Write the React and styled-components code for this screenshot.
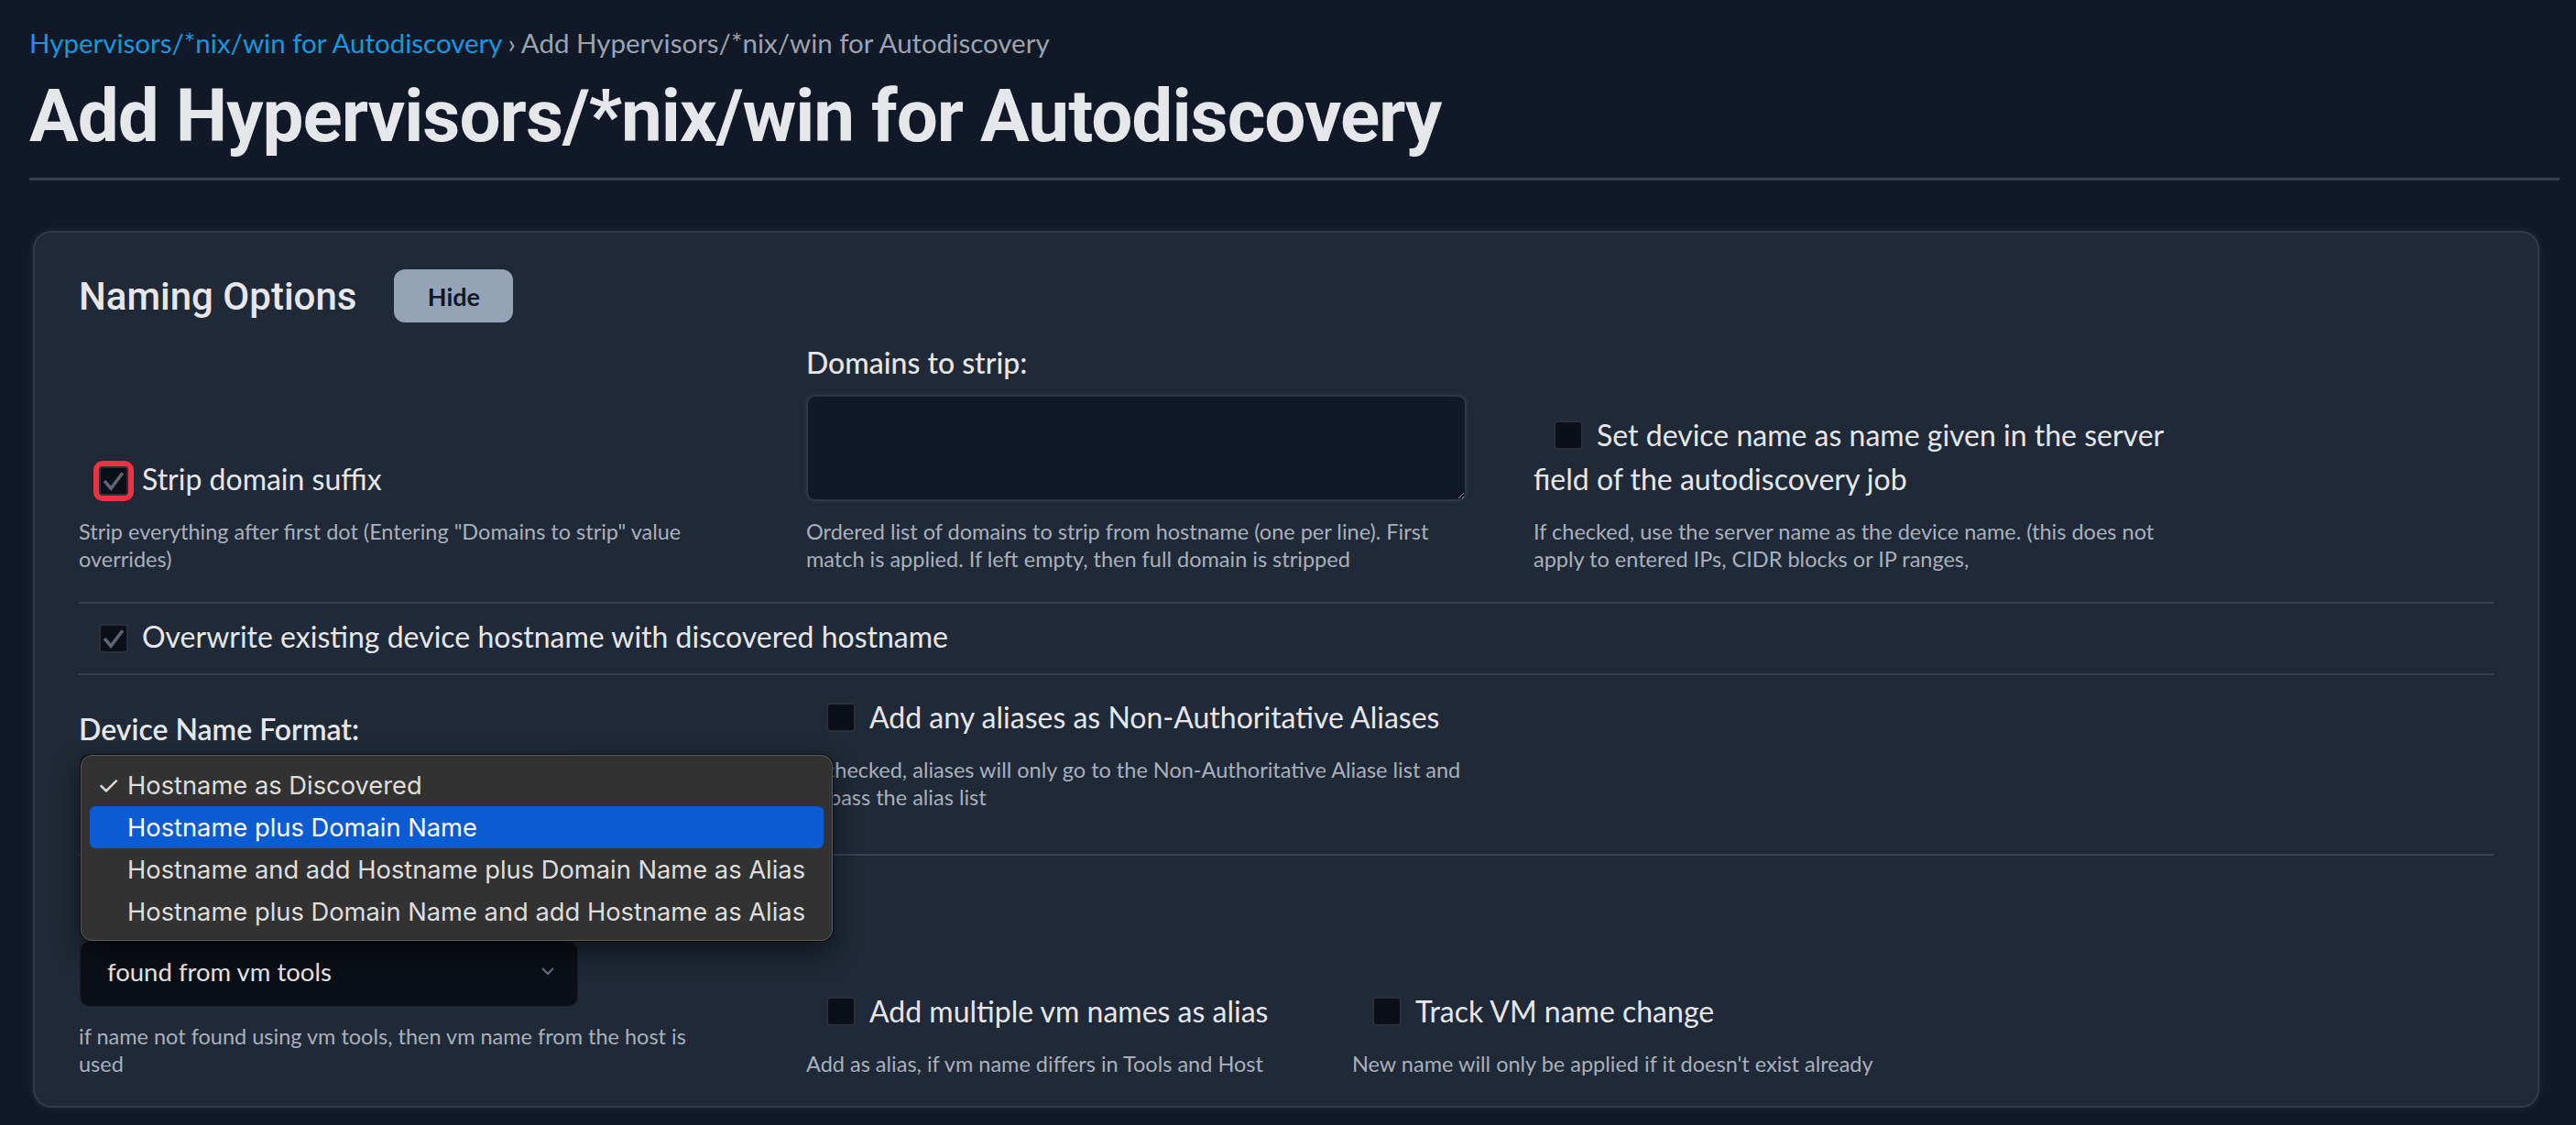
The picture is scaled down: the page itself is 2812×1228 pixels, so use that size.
import React from "react";
import styled, { createGlobalStyle } from "styled-components";

const GlobalStyle = createGlobalStyle`
  * { box-sizing: border-box; }
  html, body { margin: 0; background: #111827; }
  body { font-family: Lato, "Open Sans", sans-serif; color: #e5e7eb; }
`;

const Page = styled.div`
  min-height: 1228px;
  padding: 27px 18px 0 32px;
`;

const Breadcrumb = styled.nav`
  font-size: 29.5px;
  line-height: 40px;
  color: #9ca3af;
`;

const Crumb = styled.a`
  color: #1897de;
  text-decoration: none;
`;

const Sep = styled.span`
  margin: 0 6px;
`;

const Title = styled.h1`
  margin: 12px 0 0;
  font-family: Roboto, sans-serif;
  font-weight: 700;
  font-size: 80px;
  line-height: 96px;
  letter-spacing: -1px;
  color: #e5e7eb;
`;

const Rule = styled.hr`
  margin: 19px 0 0;
  border: 0;
  height: 3px;
  background: #374151;
`;

const Card = styled.section`
  margin: 55px 22px 0 4px;
  padding: 40px 48px 31px;
  background: #1f2937;
  border: 2px solid #323b4a;
  border-radius: 20px;
  box-shadow: 0 0 8px rgba(148, 163, 184, 0.14);
`;

const CardHeader = styled.div`
  display: flex;
  align-items: center;
  gap: 41px;
`;

const SectionTitle = styled.h2`
  margin: 0;
  font-family: Roboto, sans-serif;
  font-weight: 500;
  font-size: 42px;
  color: #e5e7eb;
`;

const HideButton = styled.button`
  width: 130px;
  height: 58px;
  border: 0;
  border-radius: 12px;
  background: #94a3b8;
  color: #111827;
  font-family: Lato, sans-serif;
  font-weight: 700;
  font-size: 27px;
`;

const Grid = styled.div`
  display: grid;
  grid-template-columns: repeat(3, 721px);
  column-gap: 73px;
  align-items: end;
  padding: ${(p) => p.$pt}px 0 ${(p) => p.$pb}px;
  border-top: ${(p) => (p.$divided ? "2px solid #374151" : "0")};
`;

const Row = styled.div`
  padding: 12px 0 16px;
  border-top: 2px solid #374151;
`;

const Field = styled.div`
  padding-bottom: ${(p) => p.$pb || 0}px;
`;

const Pair = styled.div`
  grid-column: span 2;
  display: grid;
  grid-template-columns: 596px max-content;
  align-items: end;
`;

const FieldLabel = styled.div`
  font-size: 32px;
  font-weight: ${(p) => p.$weight || 600};
  line-height: 36px;
  margin-bottom: ${(p) => p.$gap}px;
  color: #e5e7eb;
`;

const CheckLabel = styled.label`
  display: block;
  font-size: 32px;
  line-height: 48px;
  color: #e5e7eb;
`;

const Box = styled.span`
  display: inline-flex;
  align-items: center;
  justify-content: center;
  width: 32px;
  height: 32px;
  margin: 0 15px 0 22px;
  vertical-align: -4px;
  background: #0b0f17;
  border: 2px solid #2a303b;
  border-radius: 4px;
  outline: ${(p) => (p.$focus ? "6px solid #ec3344" : "none")};
`;

const Help = styled.p`
  max-width: ${(p) => p.$w || 721}px;
  margin: 18px 0 0;
  font-size: 23.5px;
  line-height: 30px;
  color: #a9b0bc;
`;

const TextArea = styled.textarea`
  display: block;
  width: 721px;
  height: 116px;
  background: #111827;
  border: 2px solid #2f3746;
  border-radius: 10px;
  resize: vertical;
  color-scheme: dark;
  box-shadow: 0 0 5px rgba(148, 163, 184, 0.15);
`;

const SelectWrap = styled.div`
  position: relative;
  width: 542px;
  margin-left: 2px;
`;

const SelectBox = styled.div`
  display: flex;
  align-items: center;
  justify-content: space-between;
  height: 70px;
  padding: 0 24px 6px 29px;
  background: #0b0f17;
  border-radius: 10px;
  box-shadow: 0 0 0 1px #1a212d;
  font-size: 27.5px;
  color: #e5e7eb;
`;

const Menu = styled.ul`
  position: absolute;
  z-index: 10;
  top: 0;
  left: 0;
  width: 821px;
  margin: 0;
  padding: 9px 0 8px;
  list-style: none;
  background: #323232;
  border: 1px solid #5c5c5c;
  border-radius: 12px;
  box-shadow: 0 0 0 1px rgba(0, 0, 0, 0.6), 0 12px 30px rgba(0, 0, 0, 0.5);
  font-family: Inter, sans-serif;
  font-size: 27.3px;
`;

const MenuItem = styled.li`
  display: flex;
  align-items: center;
  height: 46px;
  margin: 0 9px;
  border-radius: 6px;
  color: ${(p) => (p.$active ? "#ffffff" : "#dedede")};
  background: ${(p) => (p.$active ? "#0b5bd3" : "transparent")};
`;

const Tick = styled.span`
  width: 41px;
  padding-left: 8px;
  font-size: 28px;
`;

const Chevron = () => (
  <svg width="16" height="10" viewBox="0 0 16 10" fill="none">
    <polyline points="2,2 8,8 14,2" stroke="#6b7280" strokeWidth="2" />
  </svg>
);

const Check = ({ checked, focus }) => (
  <Box $focus={focus}>
    {checked && (
      <svg width="28" height="28" viewBox="0 0 24 24" fill="none">
        <polyline points="3.5,12 9.5,19 20.5,4.5" stroke="#5d6474" strokeWidth="3" />
      </svg>
    )}
  </Box>
);

const formatOptions = [
  "Hostname as Discovered",
  "Hostname plus Domain Name",
  "Hostname and add Hostname plus Domain Name as Alias",
  "Hostname plus Domain Name and add Hostname as Alias",
];

export default function App() {
  return (
    <Page>
      <GlobalStyle />
      <Breadcrumb>
        <Crumb href="#">Hypervisors/*nix/win for Autodiscovery</Crumb>
        <Sep>›</Sep>
        Add Hypervisors/*nix/win for Autodiscovery
      </Breadcrumb>
      <Title>Add Hypervisors/*nix/win for Autodiscovery</Title>
      <Rule />

      <Card>
        <CardHeader>
          <SectionTitle>Naming Options</SectionTitle>
          <HideButton>Hide</HideButton>
        </CardHeader>

        <Grid $pt={26} $pb={32}>
          <Field>
            <CheckLabel>
              <Check checked focus />
              Strip domain suffix
            </CheckLabel>
            <Help>Strip everything after first dot (Entering "Domains to strip" value overrides)</Help>
          </Field>
          <Field>
            <FieldLabel $gap={17} $weight={500}>Domains to strip:</FieldLabel>
            <TextArea />
            <Help>
              Ordered list of domains to strip from hostname (one per line). First match is applied. If left
              empty, then full domain is stripped
            </Help>
          </Field>
          <Field>
            <CheckLabel>
              <Check />
              Set device name as name given in the server field of the autodiscovery job
            </CheckLabel>
            <Help>
              If checked, use the server name as the device name. (this does not apply to entered IPs, CIDR
              blocks or IP ranges,
            </Help>
          </Field>
        </Grid>

        <Row>
          <CheckLabel>
            <Check checked />
            Overwrite existing device hostname with discovered hostname
          </CheckLabel>
        </Row>

        <Grid $divided $pt={22} $pb={38}>
          <Field>
            <FieldLabel $gap={10}>Device Name Format:</FieldLabel>
            <SelectWrap>
              <SelectBox>
                Hostname as Discovered
                <Chevron />
              </SelectBox>
              <Menu>
                {formatOptions.map((o, i) => (
                  <MenuItem key={o} $active={i === 1}>
                    <Tick>{i === 0 ? "✓" : ""}</Tick>
                    {o}
                  </MenuItem>
                ))}
              </Menu>
            </SelectWrap>
          </Field>
          <Field $pb={9}>
            <CheckLabel>
              <Check />
              Add any aliases as Non-Authoritative Aliases
            </CheckLabel>
            <Help>If checked, aliases will only go to the Non-Authoritative Aliase list and bypass the alias list</Help>
          </Field>
        </Grid>

        <Grid $divided $pt={24} $pb={0}>
          <Field>
            <FieldLabel $gap={34}>Device Name from:</FieldLabel>
            <SelectWrap>
              <SelectBox>
                found from vm tools
                <Chevron />
              </SelectBox>
            </SelectWrap>
            <Help $w={700}>if name not found using vm tools, then vm name from the host is used</Help>
          </Field>
          <Pair>
            <Field>
              <CheckLabel>
                <Check />
                Add multiple vm names as alias
              </CheckLabel>
              <Help>Add as alias, if vm name differs in Tools and Host</Help>
            </Field>
            <Field>
              <CheckLabel>
                <Check />
                Track VM name change
              </CheckLabel>
              <Help>New name will only be applied if it doesn't exist already</Help>
            </Field>
          </Pair>
        </Grid>
      </Card>
    </Page>
  );
}
